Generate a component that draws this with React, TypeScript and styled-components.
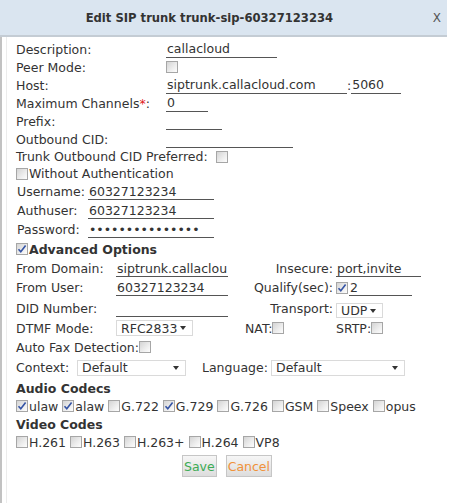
import React from "react";
import styled, { createGlobalStyle } from "styled-components";

const GlobalStyle = createGlobalStyle`
  html, body {
    margin: 0;
    padding: 0;
    background: #fff;
  }
  body {
    font-family: "DejaVu Sans", Verdana, sans-serif;
    font-size: 12.5px;
    color: #333;
  }
`;

const Dialog = styled.div`
  width: 452px;
  height: 503px;
  overflow: hidden;
`;

const TitleBar = styled.div`
  display: flex;
  align-items: center;
  height: 35px;
  margin-right: 5px;
  background: #dae5f0;
  border-bottom: 2px solid #c4ccd4;
`;

const Title = styled.div`
  flex: 1;
  padding-right: 14px;
  text-align: center;
  font-size: 11.6px;
  font-weight: bold;
  color: #333;
`;

const CloseButton = styled.span`
  padding-right: 6px;
  font-size: 12px;
  color: #555;
  cursor: pointer;
`;

const Body = styled.div`
  height: 466px;
  box-sizing: border-box;
  padding: 3px 0 0 14px;
  border-left: 2px solid #c2c2c2;
  box-shadow: inset 4px 0 0 #fff, inset 5px 0 0 #ececec;
`;

const Row = styled.div<{ $h: number; $align?: string }>`
  display: flex;
  align-items: ${(p) => p.$align ?? "center"};
  height: ${(p) => p.$h}px;
  white-space: nowrap;
`;

const Cell = styled.div<{ $w?: number; $right?: boolean; $pl?: number }>`
  display: flex;
  align-items: center;
  flex: none;
  box-sizing: border-box;
  width: ${(p) => (p.$w ? `${p.$w}px` : "auto")};
  justify-content: ${(p) => (p.$right ? "flex-end" : "flex-start")};
  padding-left: ${(p) => p.$pl ?? 0}px;
`;

const Required = styled.span`
  color: #e02020;
`;

const TextInput = styled.input<{ $w: number }>`
  width: ${(p) => p.$w}px;
  height: 17px;
  box-sizing: border-box;
  padding: 0 1px;
  border: 0;
  border-bottom: 1px solid #555;
  background: transparent;
  font-family: inherit;
  font-size: 12.5px;
  color: #333;
  outline: none;
`;

const Box = styled.span<{ $gap?: number }>`
  display: inline-flex;
  align-items: center;
  justify-content: center;
  flex: none;
  width: 12px;
  height: 12px;
  box-sizing: border-box;
  border: 1px solid #a6a6a6;
  background: linear-gradient(135deg, #d4d4d4 0%, #eeeeee 60%, #fdfdfd 100%);
  margin: 0 1px 0 ${(p) => p.$gap ?? 0}px;
`;

const Check = ({ checked, gap }: { checked?: boolean; gap?: number }) => (
  <Box $gap={gap}>
    {checked && (
      <svg width="10" height="10" viewBox="0 0 10 10">
        <path d="M1.5 5.2 L3.8 7.8 L8.6 1.6" fill="none" stroke="#3554a5" strokeWidth="1.6" />
      </svg>
    )}
  </Box>
);

const SectionTitle = styled.span`
  font-weight: bold;
  font-size: 12.5px;
`;

const SelectBox = styled.div<{ $w: number; $h?: number }>`
  display: flex;
  align-items: center;
  justify-content: space-between;
  width: ${(p) => p.$w}px;
  height: ${(p) => p.$h ?? 16}px;
  box-sizing: border-box;
  padding: 0 6px 0 4px;
  border: 1px solid #dadada;
  background: #fff;
`;

const Arrow = styled.span`
  width: 0;
  height: 0;
  border-left: 3px solid transparent;
  border-right: 3px solid transparent;
  border-top: 4px solid #333;
`;

const Select = ({ value, w, h }: { value: string; w: number; h?: number }) => (
  <SelectBox $w={w} $h={h}>
    <span>{value}</span>
    <Arrow />
  </SelectBox>
);

const CodecList = styled.div`
  display: flex;
  align-items: center;
  height: 18px;
`;

const CodecItem = styled.label`
  display: inline-flex;
  align-items: center;
  margin-right: 4px;
`;

const Buttons = styled.div`
  display: flex;
  justify-content: center;
  gap: 9px;
  margin-top: 4px;
  padding-right: 14px;
`;

const Button = styled.button<{ $color: string }>`
  height: 22px;
  padding: 0 1px;
  border: 1px solid #c6c6c6;
  background: linear-gradient(#f6f6f6, #dddddd);
  font-family: inherit;
  font-size: 12.5px;
  color: ${(p) => p.$color};
  cursor: pointer;
`;

const audioCodecs = [
  { name: "ulaw", on: true },
  { name: "alaw", on: true },
  { name: "G.722", on: false },
  { name: "G.729", on: true },
  { name: "G.726", on: false },
  { name: "GSM", on: false },
  { name: "Speex", on: false },
  { name: "opus", on: false },
];

const videoCodecs = ["H.261", "H.263", "H.263+", "H.264", "VP8"];

export default function App() {
  return (
    <Dialog>
      <GlobalStyle />
      <TitleBar>
        <Title>Edit SIP trunk trunk-sip-60327123234</Title>
        <CloseButton>X</CloseButton>
      </TitleBar>
      <Body>
        <Row $h={18}>
          <Cell $w={150}>Description:</Cell>
          <TextInput $w={111} defaultValue="callacloud" />
        </Row>
        <Row $h={18}>
          <Cell $w={150}>Peer Mode:</Cell>
          <Check />
        </Row>
        <Row $h={18}>
          <Cell $w={150}>Host:</Cell>
          <TextInput $w={181} defaultValue="siptrunk.callacloud.com" />
          <span>:</span>
          <TextInput $w={50} defaultValue="5060" />
        </Row>
        <Row $h={18}>
          <Cell $w={150}>
            Maximum Channels<Required>*</Required>:
          </Cell>
          <TextInput $w={42} defaultValue="0" />
        </Row>
        <Row $h={18}>
          <Cell $w={150}>Prefix:</Cell>
          <TextInput $w={56} defaultValue="" />
        </Row>
        <Row $h={18}>
          <Cell $w={150}>Outbound CID:</Cell>
          <TextInput $w={127} defaultValue="" />
        </Row>
        <Row $h={17}>
          <span>Trunk Outbound CID Preferred:</span>
          <Check gap={8} />
        </Row>
        <Row $h={17}>
          <Check />
          <span>Without Authentication</span>
        </Row>

        <Row $h={19}>
          <Cell $w={72} $pl={1}>Username:</Cell>
          <TextInput $w={126} defaultValue="60327123234" />
        </Row>
        <Row $h={19}>
          <Cell $w={72} $pl={1}>Authuser:</Cell>
          <TextInput $w={126} defaultValue="60327123234" />
        </Row>
        <Row $h={19}>
          <Cell $w={72} $pl={1}>Password:</Cell>
          <TextInput $w={126} type="password" defaultValue="callacloud12345" />
        </Row>
        <Row $h={20}>
          <Check checked />
          <SectionTitle>Advanced Options</SectionTitle>
        </Row>

        <Row $h={19}>
          <Cell $w={100}>From Domain:</Cell>
          <TextInput $w={112} defaultValue="siptrunk.callacloud.com" />
          <Cell $w={105} $right>Insecure:</Cell>
          <Cell $pl={3}>
            <TextInput $w={85} defaultValue="port,invite" />
          </Cell>
        </Row>
        <Row $h={19}>
          <Cell $w={100}>From User:</Cell>
          <TextInput $w={112} defaultValue="60327123234" />
          <Cell $w={105} $right>Qualify(sec):</Cell>
          <Cell $pl={3}>
            <Check checked />
            <TextInput $w={63} defaultValue="2" />
          </Cell>
        </Row>
        <Row $h={21} $align="flex-end">
          <Cell $w={100} style={{ alignSelf: "center", paddingTop: 2 }}>DID Number:</Cell>
          <TextInput $w={112} defaultValue="" style={{ marginBottom: 1 }} />
          <Cell $w={105} $right style={{ alignSelf: "center", paddingTop: 2 }}>Transport:</Cell>
          <Cell $pl={3}>
            <Select value="UDP" w={47} h={15} />
          </Cell>
        </Row>
        <Row $h={20}>
          <Cell $w={100}>DTMF Mode:</Cell>
          <Cell $w={112}>
            <Select value="RFC2833" w={77} />
          </Cell>
          <Cell $w={105} $pl={17}>
            NAT:
            <Check />
          </Cell>
          <Cell $pl={3}>
            SRTP:
            <Check />
          </Cell>
        </Row>
        <Row $h={18}>
          <span>Auto Fax Detection:</span>
          <Check />
        </Row>
        <Row $h={23}>
          <Cell $w={61}>Context:</Cell>
          <Select value="Default" w={109} />
          <Cell $w={85} $pl={16}>Language:</Cell>
          <Select value="Default" w={134} />
        </Row>

        <Row $h={18}>
          <SectionTitle>Audio Codecs</SectionTitle>
        </Row>
        <CodecList>
          {audioCodecs.map((c) => (
            <CodecItem key={c.name}>
              <Check checked={c.on} />
              {c.name}
            </CodecItem>
          ))}
        </CodecList>
        <Row $h={18}>
          <SectionTitle>Video Codes</SectionTitle>
        </Row>
        <CodecList>
          {videoCodecs.map((name) => (
            <CodecItem key={name}>
              <Check />
              {name}
            </CodecItem>
          ))}
        </CodecList>

        <Buttons>
          <Button $color="#3cab55">Save</Button>
          <Button $color="#f0923a">Cancel</Button>
        </Buttons>
      </Body>
    </Dialog>
  );
}
